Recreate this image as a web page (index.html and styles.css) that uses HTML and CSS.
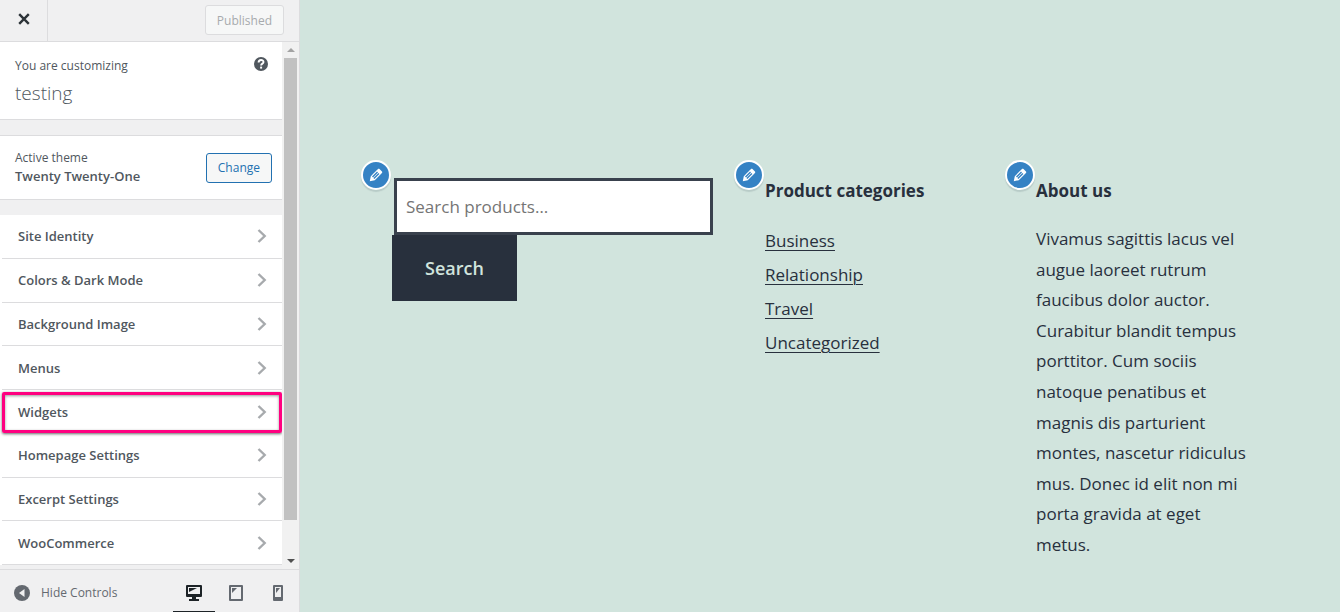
FILE: index.html
```html
<!DOCTYPE html>
<html lang="en">
<head>
    <meta charset="UTF-8">
    <meta name="viewport" content="width=device-width, initial-scale=1.0">
    <title>Customize: testing</title>
    <link rel="stylesheet" href="styles.css">
</head>
<body>
    <svg class="sprite" aria-hidden="true">
        <symbol id="chevron" viewBox="0 0 10 14">
            <path d="M1.5 1 L7.7 7 L1.5 13" fill="none" stroke="#a7aaad" stroke-width="2.4"/>
        </symbol>
        <symbol id="pencil" viewBox="0 0 20 20">
            <path fill="currentColor" d="M13.89 3.39l2.71 2.72c.46.46.42 1.24.03 1.64l-8.01 8.02-5.56 1.16 1.16-5.58s7.6-7.63 7.99-8.03c.39-.39 1.22-.39 1.68.07zm-2.73 2.79l-5.59 5.61 1.11 1.11 5.54-5.65zm-2.97 8.23l5.58-5.6-1.07-1.08-5.59 5.6z"/>
        </symbol>
    </svg>

    <aside class="sidebar">
        <div class="header">
            <button type="button" class="close-button" aria-label="Close">
                <svg width="12" height="12" viewBox="0 0 12 12"><path d="M1.2 1.2 L10.8 10.8 M10.8 1.2 L1.2 10.8" stroke="#2c3338" stroke-width="2.4"/></svg>
            </button>
            <button type="button" class="button" disabled>Published</button>
        </div>

        <div class="panel-wrap">
            <div class="panel">
                <div class="info">
                    <div>
                        <p class="small-text">You are customizing</p>
                        <h1>testing</h1>
                    </div>
                    <button type="button" class="help-button" aria-label="Help">
                        <svg width="14" height="14" viewBox="0 0 14 14"><circle cx="7" cy="7" r="7" fill="#50575e"/><path d="M4.6 5.4 C4.6 2.2 9.5 2.3 9.5 5 C9.5 6.7 7.1 6.6 7.1 8.6" fill="none" stroke="#fff" stroke-width="1.9"/><rect x="6.1" y="9.6" width="2" height="2" fill="#fff"/></svg>
                    </button>
                </div>
                <div class="theme">
                    <div>
                        <p class="small-text">Active theme</p>
                        <h2>Twenty Twenty-One</h2>
                    </div>
                    <button type="button" class="button change">Change</button>
                </div>
                <ul class="sections">
                    <li><a href="#">Site Identity<svg><use href="#chevron"/></svg></a></li>
                    <li><a href="#">Colors &amp; Dark Mode<svg><use href="#chevron"/></svg></a></li>
                    <li><a href="#">Background Image<svg><use href="#chevron"/></svg></a></li>
                    <li><a href="#">Menus<svg><use href="#chevron"/></svg></a></li>
                    <li class="highlight"><a href="#">Widgets<svg><use href="#chevron"/></svg></a></li>
                    <li><a href="#">Homepage Settings<svg><use href="#chevron"/></svg></a></li>
                    <li><a href="#">Excerpt Settings<svg><use href="#chevron"/></svg></a></li>
                    <li><a href="#">WooCommerce<svg><use href="#chevron"/></svg></a></li>
                </ul>
            </div>
            <div class="scrollbar" aria-hidden="true">
                <svg width="8" height="4" viewBox="0 0 8 4"><path d="M0 4 L4 0 L8 4z" fill="#a3a3a3"/></svg>
                <div class="thumb"></div>
                <svg width="8" height="4" viewBox="0 0 8 4"><path d="M0 0 L4 4 L8 0z" fill="#505050"/></svg>
            </div>
        </div>

        <div class="footer">
            <button type="button" class="collapse">
                <svg width="16" height="16" viewBox="0 0 16 16"><circle cx="8" cy="8" r="8" fill="#646970"/><path d="M10.5 4 V12 L5 8z" fill="#f0f0f1"/></svg>
                Hide Controls
            </button>
            <div class="devices">
                <button type="button" class="active" aria-label="Desktop">
                    <svg width="16" height="16" viewBox="0 0 16 16"><path fill="currentColor" fill-rule="evenodd" d="M1 0 H15 Q16 0 16 1 V11 Q16 12 15 12 H10 V14 H13 V16 H3 V14 H6 V12 H1 Q0 12 0 11 V1 Q0 0 1 0z M2 2 V9 H14 V2z"/><path fill="currentColor" d="M3 3 H11 L3 7z"/></svg>
                </button>
                <button type="button" aria-label="Tablet">
                    <svg width="16" height="16" viewBox="0 0 16 16"><path fill="currentColor" fill-rule="evenodd" d="M2 0 H14 Q15 0 15 1 V15 Q15 16 14 16 H2 Q1 16 1 15 V1 Q1 0 2 0z M3 2 V14 H13 V2z"/><path fill="currentColor" d="M4 3 H9 L4 8z"/></svg>
                </button>
                <button type="button" aria-label="Mobile">
                    <svg width="16" height="16" viewBox="0 0 16 16"><path fill="currentColor" fill-rule="evenodd" d="M4 0 H12 Q13 0 13 1 V15 Q13 16 12 16 H4 Q3 16 3 15 V1 Q3 0 4 0z M5 2 V12 H11 V2z"/><path fill="currentColor" d="M6 3 H10 L6 8z"/></svg>
                </button>
            </div>
        </div>
    </aside>

    <main class="preview">
        <section class="widget">
            <button type="button" class="edit-button" aria-label="Edit search widget"><svg><use href="#pencil"/></svg></button>
            <form class="search-form">
                <input type="search" placeholder="Search products…" aria-label="Search products">
                <button type="submit">Search</button>
            </form>
        </section>
        <section class="widget">
            <button type="button" class="edit-button" aria-label="Edit categories widget"><svg><use href="#pencil"/></svg></button>
            <h2>Product categories</h2>
            <ul class="categories">
                <li><a href="#">Business</a></li>
                <li><a href="#">Relationship</a></li>
                <li><a href="#">Travel</a></li>
                <li><a href="#">Uncategorized</a></li>
            </ul>
        </section>
        <section class="widget">
            <button type="button" class="edit-button" aria-label="Edit text widget"><svg><use href="#pencil"/></svg></button>
            <h2>About us</h2>
            <p class="about">Vivamus sagittis lacus vel augue laoreet rutrum faucibus dolor auctor. Curabitur blandit tempus porttitor. Cum sociis natoque penatibus et magnis dis parturient montes, nascetur ridiculus mus. Donec id elit non mi porta gravida at eget metus.</p>
        </section>
    </main>
</body>
</html>
```

FILE: styles.css
```css
* {
    box-sizing: border-box;
}
body {
    margin: 0;
    display: flex;
    height: 100vh;
    overflow: hidden;
    font-family: "Segoe UI", "Open Sans", "Noto Sans", sans-serif;
    font-size: 13px;
    color: #50575e;
    background-color: #d1e4dd;
}
h1, h2, p, ul {
    margin: 0;
    padding: 0;
}
ul {
    list-style: none;
}
button {
    font-family: inherit;
    cursor: pointer;
}
.sprite {
    display: none;
}

/* Sidebar */
.sidebar {
    width: 300px;
    flex-shrink: 0;
    display: flex;
    flex-direction: column;
    background-color: #f0f0f1;
    border-right: 1px solid #dcdcde;
}
.header {
    display: flex;
    justify-content: space-between;
    align-items: center;
    height: 42px;
    padding: 0 15px 1px 0;
    border-bottom: 1px solid #dcdcde;
}
.close-button {
    width: 48px;
    height: 41px;
    padding: 0 0 1px;
    border: none;
    border-right: 1px solid #dcdcde;
    background: none;
}
.button {
    height: 30px;
    padding: 0 11px;
    font-size: 12px;
    border: 1px solid #dcdcde;
    border-radius: 3px;
    background-color: #f6f7f7;
    color: #a7aaad;
}
.button.change {
    border-color: #2271b1;
    color: #2271b1;
}
.panel-wrap {
    display: flex;
    flex: 1;
    min-height: 0;
}
.panel {
    flex: 1;
    overflow: hidden;
}
.info, .theme {
    display: flex;
    justify-content: space-between;
    background-color: #fff;
    border-bottom: 1px solid #dcdcde;
    margin-bottom: 15px;
}
.info {
    padding: 15px 14px 8px 15px;
}
.theme {
    align-items: center;
    padding: 13px 10px 14px 15px;
    border-top: 1px solid #dcdcde;
}
.theme .button {
    margin: 3px 0 2px;
}
.small-text {
    font-size: 12px;
    line-height: 18px;
}
.info h1 {
    font-size: 19px;
    font-weight: 300;
    line-height: 36px;
}
.theme h2 {
    font-size: 13px;
    font-weight: 600;
    line-height: 18px;
}
.help-button {
    align-self: flex-start;
    display: flex;
    padding: 0;
    border: none;
    background: none;
}
.sections {
    display: grid;
    grid-auto-rows: 1fr;
    min-height: 350px;
    background-color: #fff;
}
.sections li {
    margin-left: 2px;
    border-bottom: 1px solid #dcdcde;
}
.sections a {
    display: flex;
    justify-content: space-between;
    align-items: center;
    height: 100%;
    padding: 0 15px 0 16px;
    font-weight: 600;
    color: #50575e;
    text-decoration: none;
}
.sections svg {
    width: 10px;
    height: 14px;
}
.sections .highlight {
    margin: 2px 0 1px 2px;
    border: 3px solid #ff0080;
    border-radius: 2px;
    box-shadow: 0 1px 3px rgba(0, 0, 0, 0.6), inset 0 1px 3px rgba(0, 0, 0, 0.4);
}
.highlight a {
    padding: 0 12px 0 13px;
}
.scrollbar {
    display: flex;
    flex-direction: column;
    align-items: center;
    width: 17px;
    padding: 6px 0;
    background-color: #f1f1f1;
}
.thumb {
    flex: 1;
    width: 13px;
    margin: 6px 0 39px;
    background-color: #c1c1c1;
}
.footer {
    display: flex;
    justify-content: space-between;
    height: 43px;
    border-top: 1px solid #dcdcde;
}
.collapse {
    display: flex;
    align-items: center;
    gap: 11px;
    padding: 3px 0 0 14px;
    border: none;
    background: none;
    font-size: 12px;
    color: #646970;
}
.devices {
    display: flex;
}
.devices button {
    display: flex;
    justify-content: center;
    align-items: center;
    width: 42px;
    padding: 4px 0 0;
    border: none;
    border-bottom: 1px solid transparent;
    background: none;
    color: #646970;
}
.devices .active {
    color: #1d2327;
    border-bottom-color: #1d2327;
}

/* Site preview */
.preview {
    flex: 1;
    display: grid;
    grid-template-columns: 321fr 219fr 212fr;
    gap: 52px;
    align-items: start;
    padding: 175px 92px 0;
    font-size: 17px;
    color: #28303d;
}
.widget {
    position: relative;
    min-width: 0;
}
.edit-button {
    position: absolute;
    top: -15px;
    left: -31px;
    display: flex;
    justify-content: center;
    align-items: center;
    width: 30px;
    height: 30px;
    padding: 0;
    border: 2px solid #fff;
    border-radius: 50%;
    background-color: #3582c4;
    color: #fff;
    box-shadow: 0 2px 1px rgba(46, 68, 83, 0.15);
}
.edit-button svg {
    width: 18px;
    height: 18px;
}
.widget h2 {
    font-size: 17px;
    font-weight: 700;
    line-height: 32px;
}
.search-form input {
    display: block;
    width: calc(100% - 2px);
    height: 57px;
    margin: 3px 0 0 2px;
    padding: 0 9px;
    border: 3px solid #39414d;
    border-radius: 0;
    background-color: #fff;
    font-family: inherit;
    font-size: 17px;
}
.search-form input::placeholder {
    color: #757575;
}
.search-form button {
    height: 66px;
    padding: 0 33px;
    border: none;
    background-color: #28303d;
    color: #d1e4dd;
    font-size: 18px;
    font-weight: 600;
}
.categories {
    margin-top: 17px;
}
.categories li {
    line-height: 34px;
}
.categories a {
    color: #28303d;
    text-decoration-thickness: 1px;
    text-underline-offset: 3px;
}
.about {
    margin-top: 17px;
    line-height: 1.8;
}
```
